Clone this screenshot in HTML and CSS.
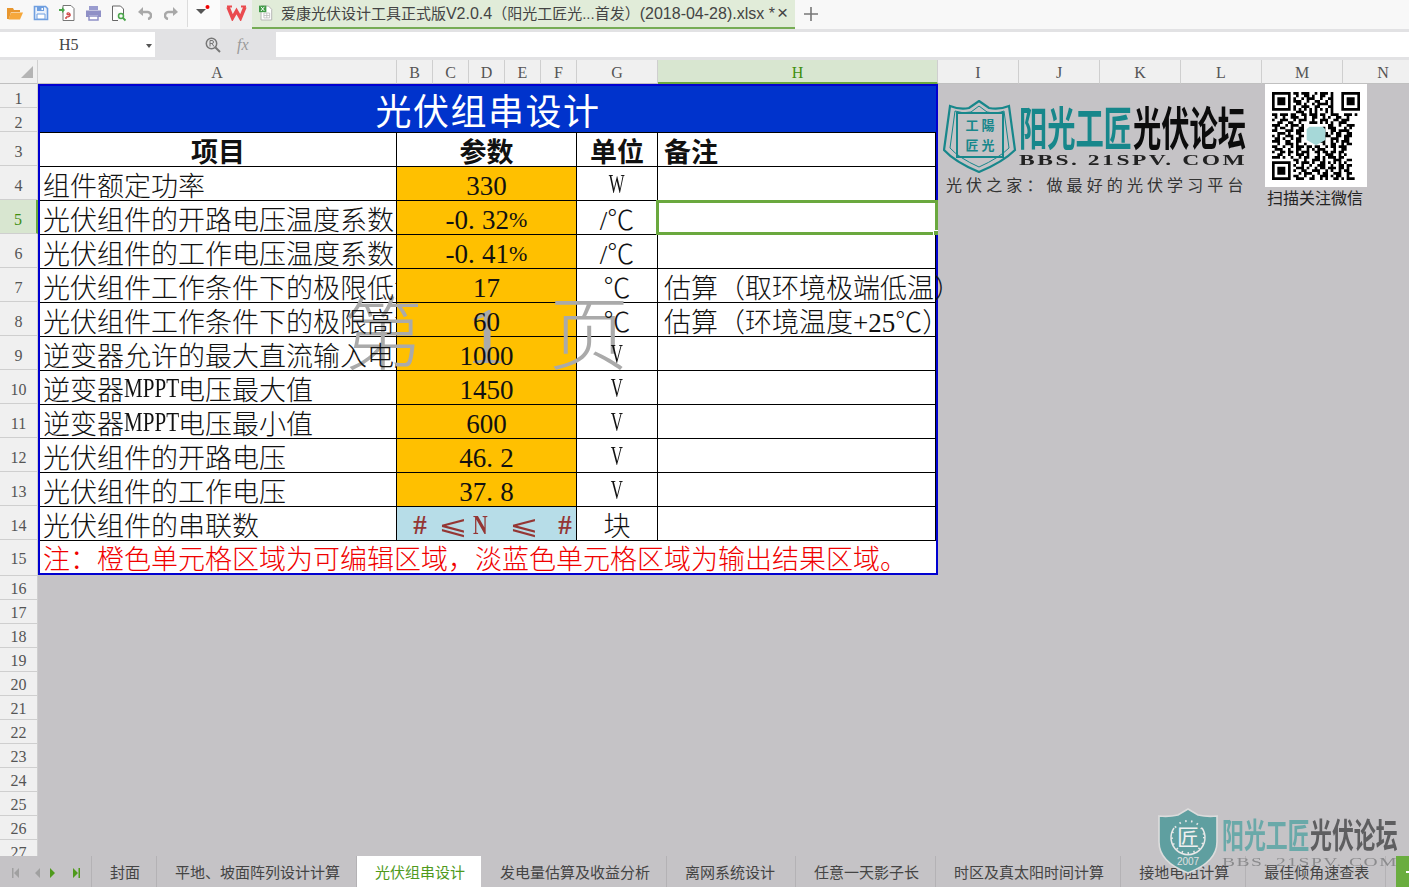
FILE: index.html
```html
<!DOCTYPE html>
<html>
  <head>
    <title>爱康光伏设计工具正式版</title>
    <link rel="stylesheet" href="styles.css">
  </head>

  <body>
    <div class="titlebar">
      <div class="tool">
        <svg width="18" height="16" viewBox="0 0 18 16"><path d="M1 3h6l1 2h6v2H5L3 14H1z" fill="#e8962e"/><path d="M5 7.500h12l-3 7H2.500z" fill="#f6a83c"/></svg>
      </div>
      <div class="tool">
        <svg width="16" height="16" viewBox="0 0 16 16"><path d="M1.500 1.500h11l2 2v11h-13z" fill="#eaf1fb" stroke="#6f9fe0" stroke-width="1.600"/><path d="M4 2h7v4H4z" fill="#6f9fe0"/><path d="M8.500 3h1.500v2H8.500z" fill="#fff"/><path d="M4 9h8v5H4z" fill="#fff" stroke="#6f9fe0"/></svg>
      </div>
      <div class="tool">
        <svg width="18" height="18" viewBox="0 0 18 18"><path d="M5 1.500h8l3 3v12H5z" fill="#fff" stroke="#777"/><path d="M1 5h3V3l3 3-3 3V7H1z" fill="#4aa64a"/><path d="M8 13c3 0 5-1 4-3s-3-1-3 0 2 1 3 0" fill="none" stroke="#d04a4a" stroke-width="1.300"/><circle cx="8" cy="14" r="1" fill="#d04a4a"/></svg>
      </div>
      <div class="tool">
        <svg width="17" height="16" viewBox="0 0 17 16"><path d="M4 1h9v4H4z" fill="#9a9ccf"/><path d="M1 5.500h15v6.500h-3v-2H4v2H1z" fill="#8f90c6"/><path d="M4 11h9v4H4z" fill="#fff" stroke="#8f90c6" stroke-width="1.500"/></svg>
      </div>
      <div class="tool">
        <svg width="16" height="17" viewBox="0 0 16 17"><path d="M1.500 1h8l3 3v6M7 15.500H1.500V1" fill="#fff" stroke="#666"/><circle cx="10" cy="11" r="2.500" fill="none" stroke="#4aa64a" stroke-width="1.500"/><path d="M12 13l2.500 2.500" stroke="#4aa64a" stroke-width="1.800"/></svg>
      </div>
      <div class="tool">
        <svg width="14" height="14" viewBox="0 0 14 14"><path d="M4 6h5a3.500 3.500 0 0 1 1 7" fill="none" stroke="#a8a8a8" stroke-width="2.500"/><path d="M0 6l5-5v9z" fill="#a8a8a8"/></svg>
      </div>
      <div class="tool">
        <svg width="14" height="14" viewBox="0 0 14 14"><path d="M10 6H5a3.500 3.500 0 0 0-1 7" fill="none" stroke="#a8a8a8" stroke-width="2.500"/><path d="M14 6L9 1v9z" fill="#a8a8a8"/></svg>
      </div>
      <div class="toolSep"></div>
      <div class="customize">
        <svg width="16" height="12" viewBox="0 0 16 12"><path d="M0 4h10L5 9z" fill="#555"/><circle cx="11.500" cy="2" r="2" fill="#f00000"/></svg>
      </div>
      <div class="wpsTile">
        <svg width="21" height="16" viewBox="0 0 21 16"><path d="M2 2l4.500 11 4-7 4 7L19 2" fill="none" stroke="#ea4a4f" stroke-width="3.400"/><path d="M1 1.500h5M15 1.500h5" stroke="#ea4a4f" stroke-width="2"/></svg>
      </div>
      <div class="docTab">
        <svg width="17" height="20" viewBox="0 0 17 20"><path d="M2.500 1.500h9l4 4v13h-13z" fill="#fff" stroke="#aaa"/><path d="M6 10h7v6H6zM6 13h7M9.500 10v6" fill="none" stroke="#bbb"/><path d="M0 1h9v8H0z" fill="#3f9a46"/><path d="M2.500 2.500l4 5m0-5l-4 5" stroke="#fff" stroke-width="1.200"/></svg>
        <span class="docName">爱康光伏设计工具正式版<span class="docLatin">V2.0.4</span>（阳光工匠光...首发）<span class="docLatin">(2018-04-28).xlsx *</span></span>
        <span class="docClose">×</span>
      </div>
      <div class="newTab">
        <svg width="14" height="14" viewBox="0 0 14 14"><path d="M0 7h14M7 0v14" stroke="#777" stroke-width="1.600"/></svg>
      </div>
    </div>

    <div class="formulaBar">
      <div class="nameBox">
        <span>H5</span>
        <i class="nameArrow"></i>
      </div>
      <div class="formulaTools">
        <svg width="16" height="16" viewBox="0 0 16 16"><circle cx="6.500" cy="6.500" r="5.200" fill="none" stroke="#777" stroke-width="1.500"/><path d="M10.500 10.500l4.500 4.500" stroke="#777" stroke-width="2"/><path d="M5 9.500v-6h2a1.500 1.500 0 0 1 0 3H5m2 0l2 3" fill="none" stroke="#777"/></svg>
        <span class="fx">fx</span>
      </div>
      <div class="formulaInput"></div>
    </div>

    <div class="colHeads">
      <div class="corner"><i></i></div>
      <div class="colHead colA">A</div>
      <div class="colHead colN">B</div>
      <div class="colHead colN">C</div>
      <div class="colHead colN">D</div>
      <div class="colHead colN">E</div>
      <div class="colHead colN">F</div>
      <div class="colHead colW">G</div>
      <div class="colHead colH active">H</div>
      <div class="colHead colW">I</div>
      <div class="colHead colW">J</div>
      <div class="colHead colW">K</div>
      <div class="colHead colW">L</div>
      <div class="colHead colW">M</div>
      <div class="colHead colW">N</div>
    </div>

    <div class="sheet">
      <div class="rowHeads">
        <div class="rowHead top">1</div>
        <div class="rowHead top">2</div>
        <div class="rowHead tall">3</div>
        <div class="rowHead tall">4</div>
        <div class="rowHead tall active">5</div>
        <div class="rowHead tall">6</div>
        <div class="rowHead tall">7</div>
        <div class="rowHead tall">8</div>
        <div class="rowHead tall">9</div>
        <div class="rowHead tall">10</div>
        <div class="rowHead tall">11</div>
        <div class="rowHead tall">12</div>
        <div class="rowHead tall">13</div>
        <div class="rowHead tall">14</div>
        <div class="rowHead last">15</div>
        <div class="rowHead">16</div>
        <div class="rowHead">17</div>
        <div class="rowHead">18</div>
        <div class="rowHead">19</div>
        <div class="rowHead">20</div>
        <div class="rowHead">21</div>
        <div class="rowHead">22</div>
        <div class="rowHead">23</div>
        <div class="rowHead">24</div>
        <div class="rowHead">25</div>
        <div class="rowHead">26</div>
        <div class="rowHead">27</div>
      </div>

      <div class="canvas">
        <div class="report">
          <div class="title">光伏组串设计</div>

          <div class="cell head center">项目</div>
          <div class="cell head center">参数</div>
          <div class="cell head center">单位</div>
          <div class="cell head">备注</div>

          <div class="cell">组件额定功率</div>
          <div class="cell input">330</div>
          <div class="cell center"><span class="unit">W</span></div>
          <div class="cell"></div>

          <div class="cell">光伏组件的开路电压温度系数</div>
          <div class="cell input">-0<span class="dot">.</span>32<span class="pct">%</span></div>
          <div class="cell center">/℃</div>
          <div class="cell selected"><div class="selection"><i></i></div></div>

          <div class="cell">光伏组件的工作电压温度系数</div>
          <div class="cell input">-0<span class="dot">.</span>41<span class="pct">%</span></div>
          <div class="cell center">/℃</div>
          <div class="cell"></div>

          <div class="cell"><span class="lift">光伏组件工作条件下的极限低温</span></div>
          <div class="cell input"><span class="lift">17</span></div>
          <div class="cell center"><span class="lift">℃</span></div>
          <div class="cell spill">估算（取环境极端低温）</div>

          <div class="cell"><span class="lift">光伏组件工作条件下的极限高温</span></div>
          <div class="cell input"><span class="lift">60</span></div>
          <div class="cell center"><span class="lift">℃</span></div>
          <div class="cell spill">估算（环境温度+25℃）</div>

          <div class="cell"><span class="lift">逆变器允许的最大直流输入电压</span></div>
          <div class="cell input"><span class="lift">1000</span></div>
          <div class="cell center"><span class="lift unit">V</span></div>
          <div class="cell"></div>

          <div class="cell">逆变器<span class="latin">MPPT</span>电压最大值</div>
          <div class="cell input">1450</div>
          <div class="cell center"><span class="unit">V</span></div>
          <div class="cell"></div>

          <div class="cell">逆变器<span class="latin">MPPT</span>电压最小值</div>
          <div class="cell input">600</div>
          <div class="cell center"><span class="unit">V</span></div>
          <div class="cell"></div>

          <div class="cell">光伏组件的开路电压</div>
          <div class="cell input">46<span class="dot">.</span>2</div>
          <div class="cell center"><span class="unit">V</span></div>
          <div class="cell"></div>

          <div class="cell">光伏组件的工作电压</div>
          <div class="cell input">37<span class="dot">.</span>8</div>
          <div class="cell center"><span class="unit">V</span></div>
          <div class="cell"></div>

          <div class="cell">光伏组件的串联数</div>
          <div class="cell output">
            <span class="hash">#</span>
            <span class="leq leqOne">⩽</span>
            <span class="letterN">N</span>
            <span class="leq leqTwo">⩽</span>
            <span class="hash hashTwo">#</span>
          </div>
          <div class="cell center">块</div>
          <div class="cell"></div>

          <div class="cell note">注：橙色单元格区域为可编辑区域，淡蓝色单元格区域为输出结果区域。</div>
        </div>

        <div class="pageMark">
          <span>第</span>
          <span>1</span>
          <span>页</span>
        </div>

        <div class="brand">
          <div class="brandTop">
            <svg class="brandShield" width="74" height="73" viewBox="0 0 74 73">
              <path d="M36 1l10 7q10 2 20-2l6 44q-12 12-36 22Q12 62 1 50L7 6q10 4 19 2z" fill="none" stroke="#17878b" stroke-width="2.200"/>
              <path d="M36 6l8 6q10 2 17-1l5 37q-10 10-30 19Q16 58 7 48l5-37q8 3 16 1z" fill="none" stroke="#17878b"/>
              <path d="M14 13h46v44H14z" fill="none" stroke="#17878b" stroke-width="2"/>
              <text x="37" y="30" text-anchor="middle" class="shieldText">工 陽</text>
              <text x="37" y="50" text-anchor="middle" class="shieldText">匠 光</text>
            </svg>
            <div class="brandWords">
              <div class="brandName"><span class="squeeze teal">阳光工匠</span><span class="squeeze">光伏论坛</span></div>
              <div class="brandUrl">BBS. 21SPV. COM</div>
            </div>
          </div>
          <div class="brandSlogan">光伏之家：做最好的光伏学习平台</div>
        </div>

        <div class="qrCard">
          <svg width="88" height="88" viewBox="0 0 33 33">
            <path fill-rule="evenodd" d="M0 0h7v7H0zM1 1v5h5V1zM26 0h7v7h-7zM27 1v5h5V1zM0 26h7v7H0zM1 27v5h5v-5z"/>
            <path d="M2 2h3v3H2zM28 2h3v3h-3zM2 28h3v3H2z"/>
            <path class="qrBits" d="M8 .5h2m1 0h3m2 0h1m1 0h3m1 0h1
              M9 1.500h1m2 0h2m1 0h1m2 0h2m2 0h1
              M8 2.500h1m2 0h1m1 0h3m2 0h1m2 0h2
              M8 3.500h3m2 0h1m2 0h2m2 0h1m1 0h1
              M9 4.500h2m1 0h1m2 0h1m1 0h4m1 0h1
              M8 5.500h1m2 0h3m2 0h2m3 0h2
              M8 6.500h1m1 0h1m1 0h1m1 0h1m1 0h1m1 0h1m1 0h1m1 0h1
              M9 7.500h3m2 0h1m1 0h1m3 0h1m1 0h1
              M0 8.500h2m1 0h3m1 0h2m2 0h2m1 0h3m1 0h2m2 0h3m2 0h3m1 0h1
              M1 9.500h1m2 0h1m2 0h3m2 0h1m2 0h2m2 0h1m1 0h1m2 0h2m2 0h1
              M0 10.500h1m2 0h3m2 0h1m1 0h3m2 0h1m2 0h3m2 0h2m1 0h3
              M2 11.500h2m2 0h2m2 0h1m3 0h3m1 0h1m1 0h1m1 0h1m2 0h3
              M0 12.500h3m2 0h1m1 0h3m1 0h1m9 0h2m2 0h1m2 0h3
              M1 13.500h1m1 0h2m2 0h1m2 0h2m7 0h1m1 0h3m3 0h1m1 0h1
              M0 14.500h2m3 0h3m1 0h3m7 0h1m2 0h2m1 0h4
              M2 15.500h3m1 0h1m2 0h2m9 0h1m1 0h1m1 0h2m2 0h2
              M0 16.500h1m1 0h1m2 0h3m2 0h2m7 0h3m2 0h2m1 0h3
              M1 17.500h2m1 0h1m2 0h1m1 0h2m8 0h1m2 0h3m2 0h2
              M0 18.500h3m2 0h2m2 0h2m7 0h2m2 0h1m1 0h1m1 0h3
              M2 19.500h1m2 0h3m1 0h1m2 0h1m6 0h1m2 0h2m2 0h1m1 0h2
              M0 20.500h2m2 0h1m2 0h1m1 0h3m1 0h2m1 0h2m2 0h1m1 0h2m1 0h3
              M1 21.500h3m2 0h1m2 0h2m2 0h1m1 0h1m1 0h3m3 0h1m2 0h2
              M0 22.500h1m2 0h2m1 0h2m1 0h1m1 0h3m2 0h2m1 0h2m1 0h2m1 0h2
              M2 23.500h2m2 0h1m2 0h3m1 0h1m3 0h1m2 0h3m2 0h1m1 0h1
              M0 24.500h3m1 0h1m2 0h1m2 0h1m1 0h2m2 0h2m1 0h1m1 0h3m1 0h2
              M8 25.500h2m2 0h1m2 0h3m1 0h1m3 0h3m2 0h2
              M9 26.500h1m1 0h3m1 0h1m2 0h2m1 0h1m1 0h1m1 0h1m1 0h1
              M8 27.500h1m2 0h1m2 0h1m2 0h3m2 0h1m2 0h2m1 0h2
              M9 28.500h3m1 0h1m2 0h1m1 0h2m1 0h3m1 0h2m1 0h1
              M8 29.500h1m2 0h2m2 0h3m2 0h1m1 0h1m2 0h1m1 0h2
              M10 30.500h1m1 0h3m2 0h1m1 0h2m2 0h3m2 0h2
              M8 31.500h2m2 0h1m2 0h1m2 0h3m1 0h1m1 0h2m2 0h1
              M9 32.500h3m2 0h2m2 0h1m1 0h1m2 0h2m1 0h1m1 0h3"/>
            <path d="M14 13h5l1 1v4l-3.500 2L13 18v-4z" fill="#a6d8d8"/>
          </svg>
        </div>
        <div class="qrCaption">扫描关注微信</div>
      </div>
    </div>

    <div class="sheetTabs">
      <div class="tabNav">
        <svg width="68" height="10" viewBox="0 0 68 10">
          <path d="M0 0h1.500v10H0zM7 0v10L2 5zM28 0v10l-5-5z" fill="#a0a0a0"/>
          <path d="M38 0l5 5-5 5zM61 0l5 5-5 5zM66.500 0H68v10h-1.500z" fill="#4f9a1c"/>
        </svg>
      </div>
      <div class="sheetTab">封面</div>
      <div class="sheetTab">平地、坡面阵列设计计算</div>
      <div class="sheetTab current">光伏组串设计</div>
      <div class="sheetTab afterCurrent">发电量估算及收益分析</div>
      <div class="sheetTab wide">离网系统设计</div>
      <div class="sheetTab">任意一天影子长</div>
      <div class="sheetTab">时区及真太阳时间计算</div>
      <div class="sheetTab">接地电阻计算</div>
      <div class="sheetTab">最佳倾角速查表</div>
      <div class="tabAdd"></div>
    </div>

    <div class="stamp">
      <svg width="60" height="66" viewBox="0 0 60 66">
        <path d="M30 1l10 6q9 2 19 1v26q0 20-29 31Q1 54 1 34V8q10 1 19-1z" fill="#5f9fa0" stroke="#dcdcdc" stroke-width="1.600"/>
        <path d="M44 20a17 17 0 1 1-28 0" fill="none" stroke="#e8e8e8" stroke-width="1.500"/>
        <circle cx="30" cy="29" r="16" fill="none" stroke="#e8e8e8" stroke-width="2" stroke-dasharray="1.500 4.500"/>
        <text x="30" y="37" text-anchor="middle" class="stampGlyph">匠</text>
        <text x="30" y="57" text-anchor="middle" class="stampYear">2007</text>
      </svg>
      <div class="stampWords">
        <div class="stampName"><span class="squeezeSmall stampTeal">阳光工匠</span><span class="squeezeSmall">光伏论坛</span></div>
        <div class="stampUrl">BBS. 21SPV. COM</div>
      </div>
    </div>
  </body>
</html>
```

FILE: styles.css
```css
* {
  box-sizing: border-box;
}

html,
body {
  margin: 0;
  height: 887px;
  overflow: hidden;
}

body {
  position: relative;
  display: flex;
  flex-direction: column;
  background-color: #c5c3c6;
  font-family: "Liberation Serif", "Noto Sans CJK SC", serif;
}

/* top bar */
.titlebar {
  display: flex;
  align-items: stretch;
  height: 29px;
  padding-left: 2px;
  background-color: #f8f8f8;
}
.tool {
  width: 26px;
  display: flex;
  align-items: center;
  justify-content: center;
  padding-bottom: 3px;
}
.toolSep {
  width: 1px;
  height: 27px;
  margin-left: 3px;
  background-color: #dcdcdc;
}
.customize {
  width: 32px;
  display: flex;
  align-items: center;
  justify-content: center;
  padding-bottom: 8px;
  background-color: #fbfbfb;
}
.wpsTile {
  width: 32px;
  display: flex;
  align-items: center;
  justify-content: center;
  padding-bottom: 4px;
  background-color: #efefef;
}
.docTab {
  width: 543px;
  flex-shrink: 0;
  display: flex;
  align-items: center;
  padding: 0 7px 2px;
  background-color: #e1ecd9;
  border-bottom: 2px solid #76ac55;
  font-family: "Liberation Sans", "Noto Sans CJK SC", sans-serif;
  font-size: 15px;
  color: #444;
}
.docName {
  margin-left: 8px;
  white-space: nowrap;
}
.docLatin {
  font-size: 16px;
}
.docClose {
  margin-left: 2px;
  font-size: 19px;
  font-weight: 300;
}
.newTab {
  width: 32px;
  display: flex;
  align-items: center;
  justify-content: center;
  padding-bottom: 2px;
}

/* formula bar */
.formulaBar {
  display: flex;
  height: 31px;
  padding: 3px 0;
  background-color: #e2e2e4;
}
.nameBox {
  position: relative;
  width: 155px;
  display: flex;
  align-items: center;
  padding-left: 59px;
  background-color: #fff;
  font-size: 16px;
  color: #444;
}
.nameArrow {
  position: absolute;
  right: 3px;
  top: 12px;
  border-top: 4px solid #555;
  border-left: 3px solid transparent;
  border-right: 3px solid transparent;
}
.formulaTools {
  width: 121px;
  display: flex;
  align-items: center;
  padding-left: 50px;
  gap: 16px;
}
.fx {
  font-size: 16px;
  font-style: italic;
  color: #9a9a9a;
}
.formulaInput {
  flex: 1;
  background-color: #fff;
}

/* column letters */
.colHeads {
  display: flex;
  height: 24px;
  flex-shrink: 0;
  overflow: hidden;
}
.corner {
  width: 38px;
  flex-shrink: 0;
  background-color: #f0f0f0;
  border-bottom: 1px solid #c0c0c0;
  border-right: 1px solid #d0d0d0;
  position: relative;
}
.corner i {
  position: absolute;
  left: 21px;
  top: 6px;
  border-bottom: 12px solid #b4b4b4;
  border-left: 12px solid transparent;
}
.colHead {
  flex-shrink: 0;
  display: flex;
  align-items: center;
  justify-content: center;
  padding-top: 3px;
  background-color: #f0f0f0;
  border-right: 1px solid #cfcfcf;
  border-bottom: 1px solid #c0c0c0;
  font-size: 16px;
  color: #555;
}
.colA {
  width: 359px;
}
.colN {
  width: 36px;
}
.colW {
  width: 81px;
}
.colH {
  width: 280px;
}
.colHead.active {
  background-color: #d8e6d0;
  border-bottom: 2px solid #6aa83e;
  color: #3f8f10;
}

/* grid area */
.sheet {
  display: flex;
  flex: 1;
  min-height: 0;
  overflow: hidden;
}
.rowHeads {
  width: 38px;
  flex-shrink: 0;
}
.rowHead {
  height: 24px;
  display: flex;
  align-items: center;
  justify-content: center;
  padding-top: 3px;
  background-color: #f0f0f0;
  border-bottom: 1px solid #cfcfcf;
  border-right: 1px solid #cfcfcf;
  font-size: 16px;
  color: #555;
}
.rowHead.top {
  padding-top: 6px;
}
.rowHead.tall {
  height: 34px;
  padding-top: 6px;
}
.rowHead.last {
  height: 36px;
}
.rowHead.active {
  background-color: #d8e6d0;
  border-right: 2px solid #6aa83e;
  color: #3f8f10;
}

.canvas {
  position: relative;
  flex: 1;
}
.report {
  width: 900px;
  display: grid;
  grid-template-columns: 357px 180px 81px 278px;
  grid-template-rows: 47px repeat(12, 34px) 32px;
  border: 2px solid #0000d0;
  background-color: #fff;
  font-size: 27px;
  color: #111;
}
.title {
  grid-column: 1 / -1;
  display: flex;
  align-items: center;
  justify-content: center;
  background-color: #0033cc;
  border-bottom: 1px solid #000;
  font-size: 36px;
  letter-spacing: 1.500px;
  color: #fff;
}
.cell {
  display: flex;
  align-items: center;
  padding: 1px 0 0 3px;
  border-right: 1px solid #000;
  border-bottom: 1px solid #000;
  white-space: nowrap;
  overflow: hidden;
  font-weight: 300;
}
.center {
  justify-content: center;
  padding-left: 0;
}
.head {
  font-weight: 700;
  padding-left: 6px;
}
.head.center {
  padding-left: 0;
}
.input {
  justify-content: center;
  padding: 5px 0 0;
  background-color: #ffc000;
}
.unit {
  display: inline-block;
  transform: scaleX(0.62);
}
.output {
  justify-content: flex-start;
  padding: 3px 0 0 16px;
  background-color: #b7dde8;
  color: #943634;
}
.hash {
  width: 14px;
  text-align: center;
  font-weight: 700;
}
.hashTwo {
  margin-left: 21px;
}
.letterN {
  width: 14px;
  margin-left: 7px;
  font-weight: 700;
  transform: scaleX(0.75);
  transform-origin: left center;
}
.leq {
  width: 26px;
  text-align: center;
  font-family: "DejaVu Sans", sans-serif;
  font-weight: 400;
  font-size: 26px;
  transform: scaleX(1.35);
}
.leqOne {
  margin-left: 13px;
}
.leqTwo {
  margin-left: 24px;
}
.dot {
  display: inline-block;
  width: 14px;
}
.pct {
  font-size: 22px;
}
.latin {
  display: inline-block;
  width: 54px;
  transform: scaleX(0.78);
  transform-origin: left center;
}
.spill {
  overflow: visible;
  padding-left: 6px;
  z-index: 3;
  position: relative;
}
.note {
  grid-column: 1 / -1;
  border-right: none;
  border-bottom: none;
  color: #f00000;
}
.lift {
  position: relative;
  z-index: 2;
}
.selected {
  position: relative;
  overflow: visible;
  padding: 0;
  z-index: 3;
}
.selection {
  position: absolute;
  left: -2px;
  top: -1px;
  width: 282px;
  height: 35px;
  border: 3px solid #6aa83e;
}
.selection i {
  position: absolute;
  right: -3px;
  bottom: -3px;
  width: 5px;
  height: 5px;
  background-color: #6aa83e;
  border-left: 1px solid #fff;
  border-top: 1px solid #fff;
}

/* print area text across the table */
.pageMark {
  position: absolute;
  left: 305px;
  top: 210px;
  width: 286px;
  display: flex;
  justify-content: space-between;
  z-index: 1;
  font-size: 80px;
  font-weight: 300;
  line-height: 84px;
  color: #aaaaaa;
}

/* floating pictures on the sheet */
.brand {
  position: absolute;
  left: 905px;
  top: 16px;
  width: 310px;
  font-family: "Noto Sans CJK SC", sans-serif;
}
.brandTop {
  display: flex;
}
.brandShield {
  flex-shrink: 0;
}
.shieldText {
  font-family: "Noto Sans CJK SC", sans-serif;
  font-size: 13px;
  font-weight: 700;
  fill: #17878b;
}
.brandWords {
  margin-left: 2px;
}
.brandName {
  display: flex;
  height: 50px;
  font-size: 46px;
  line-height: 50px;
  font-weight: 700;
  color: #0c0c0c;
  white-space: nowrap;
}
.squeeze {
  display: inline-block;
  width: 114px;
  transform: scaleX(0.615);
  transform-origin: left center;
}
.teal {
  color: #17878b;
}
.brandUrl {
  width: 134px;
  margin-top: 3px;
  font-family: "Liberation Serif", serif;
  font-weight: 700;
  font-size: 14px;
  line-height: 15px;
  letter-spacing: 1.500px;
  color: #222;
  white-space: nowrap;
  transform: scaleX(1.68);
  transform-origin: left center;
}
.brandSlogan {
  margin: 0 0 0 3px;
  font-size: 16px;
  line-height: 22px;
  letter-spacing: 4.100px;
  color: #333;
  white-space: nowrap;
}
.qrCard {
  position: absolute;
  left: 1227px;
  top: 0;
  width: 102px;
  height: 103px;
  display: flex;
  align-items: center;
  justify-content: center;
  background-color: #fff;
}
.qrCard svg {
  filter: blur(0.4px);
}
.qrBits {
  fill: none;
  stroke: #000;
  stroke-width: 1;
}
.qrCaption {
  position: absolute;
  left: 1229px;
  top: 102px;
  font-family: "Noto Sans CJK SC", sans-serif;
  font-size: 16px;
  line-height: 22px;
  color: #222;
  white-space: nowrap;
}

/* sheet tabs */
.sheetTabs {
  display: flex;
  height: 31px;
  flex-shrink: 0;
  background-color: #c5c3c6;
  font-family: "Noto Sans CJK SC", sans-serif;
  font-size: 15px;
  color: #444;
}
.tabNav {
  width: 93px;
  display: flex;
  align-items: center;
  padding: 2px 0 0 12px;
  border-right: 1px solid #b4b2b5;
}
.sheetTab {
  display: flex;
  align-items: center;
  padding: 0 16px 0 18px;
  border-right: 1px solid #b4b2b5;
  white-space: nowrap;
}
.sheetTab.current {
  background-color: #fff;
  border-right: none;
  color: #4f9a1c;
}
.sheetTab.afterCurrent {
  padding-left: 19px;
}
.sheetTab.wide {
  padding-right: 20px;
}
.tabAdd {
  position: relative;
  width: 13px;
  margin-left: 10px;
  background-color: #6aad3f;
}
.tabAdd::after {
  content: "";
  position: absolute;
  right: 0;
  top: 15px;
  width: 3px;
  height: 2px;
  background-color: #fff;
}

/* translucent stamp over bottom right corner */
.stamp {
  position: absolute;
  left: 1158px;
  top: 808px;
  display: flex;
  font-family: "Noto Sans CJK SC", sans-serif;
  z-index: 5;
}
.stampGlyph {
  font-family: "Noto Sans CJK SC", sans-serif;
  font-size: 22px;
  fill: #f0f0f0;
}
.stampYear {
  font-family: "Liberation Sans", sans-serif;
  font-size: 10px;
  fill: #e0e0e0;
}
.stampWords {
  margin-left: 4px;
  padding-top: 8px;
}
.stampName {
  display: flex;
  height: 36px;
  font-size: 34px;
  line-height: 36px;
  font-weight: 700;
  color: #5e5e60;
  white-space: nowrap;
}
.squeezeSmall {
  display: inline-block;
  width: 88px;
  transform: scaleX(0.645);
  transform-origin: left center;
}
.stampTeal {
  color: #6aa9a9;
}
.stampUrl {
  width: 116px;
  margin-top: 2px;
  font-family: "Liberation Serif", serif;
  font-size: 13px;
  line-height: 15px;
  letter-spacing: 1px;
  color: #8b8b8d;
  white-space: nowrap;
  transform: scaleX(1.5);
  transform-origin: left center;
}
```
